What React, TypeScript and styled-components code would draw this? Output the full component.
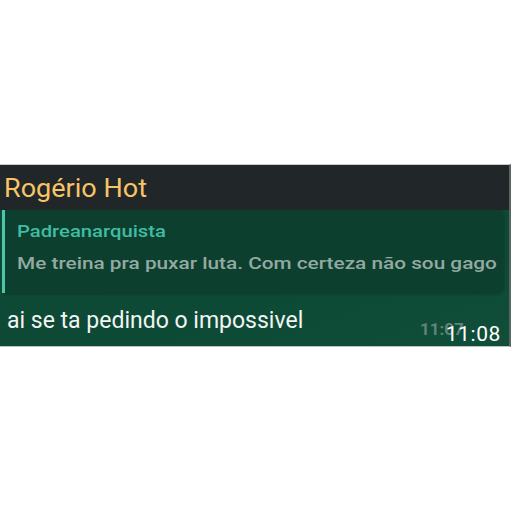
import React from 'react';
import styled, { createGlobalStyle } from 'styled-components';

const GlobalStyle = createGlobalStyle`
  html, body {
    margin: 0;
    padding: 0;
    background: #ffffff;
    font-family: Roboto, "Noto Sans", sans-serif;
  }
`;

const Page = styled.div`
  width: 512px;
  height: 512px;
  padding-top: 164px;
  box-sizing: border-box;
`;

const Card = styled.div`
  width: 511px;
  display: flex;
  flex-direction: column;
  background: linear-gradient(160deg, #0f4734 0%, #0d4a36 60%, #114e3a 100%);
  border-top: 1px solid #c9cccd;
  border-right: 2px solid #5a6660;
  border-bottom: 1px solid #b9c2be;
  box-sizing: border-box;
`;

// the screenshot text is a bit wider than plain Roboto, so stretch it
const Wide = styled.span<{ $x: number }>`
  display: inline-block;
  white-space: nowrap;
  transform: scaleX(${p => p.$x});
  transform-origin: left center;
`;

const Header = styled.div`
  height: 45px;
  background: #212629;
  display: flex;
  align-items: center;
  padding-left: 4px;
  color: #f7c467;
  font-size: 25.5px;
`;

const Quote = styled.div`
  margin: 0 6px 0 2px;
  height: 83px;
  background: #0d3f2e;
  border-left: 3px solid #4cc7ad;
  border-radius: 0 0 8px 0;
  box-shadow: 2px 2px 2px rgba(0, 0, 0, 0.15);
  display: flex;
  flex-direction: column;
  gap: 10px;
  padding: 10px 0 0 12px;
  box-sizing: border-box;
`;

const QuoteAuthor = styled.div`
  color: #3fbca2;
  font-size: 17px;
  font-weight: 500;
  line-height: 22px;
`;

const QuoteText = styled.div`
  color: #93aaa2;
  font-size: 17px;
  font-weight: 500;
  line-height: 22px;
`;

const Body = styled.div`
  height: 53px;
  display: flex;
  align-items: flex-start;
  justify-content: space-between;
  padding: 14px 8px 0 7px;
  box-sizing: border-box;
`;

const Message = styled.div`
  color: #f2f5f3;
  font-size: 23px;
  line-height: 28px;
`;

const Times = styled.div`
  position: relative;
  width: 84px;
  height: 38px;
`;

const OldTime = styled.span`
  position: absolute;
  left: 3px;
  top: 12px;
  color: rgba(150, 170, 162, 0.6);
  font-size: 17px;
  font-weight: 700;
`;

const NewTime = styled.span`
  position: absolute;
  right: 0;
  top: 15px;
  color: #ffffff;
  font-size: 21px;
  letter-spacing: 0.6px;
`;

export default function App() {
  return (
    <Page>
      <GlobalStyle />
      <Card>
        <Header>
          <Wide $x={1.06}>Rogério Hot</Wide>
        </Header>
        <Quote>
          <QuoteAuthor>
            <Wide $x={1.19}>Padreanarquista</Wide>
          </QuoteAuthor>
          <QuoteText>
            <Wide $x={1.222}>Me treina pra puxar luta. Com certeza não sou gago</Wide>
          </QuoteText>
        </Quote>
        <Body>
          <Message>ai se ta pedindo o impossivel</Message>
          <Times>
            <OldTime>11:07</OldTime>
            <NewTime>11:08</NewTime>
          </Times>
        </Body>
      </Card>
    </Page>
  );
}
